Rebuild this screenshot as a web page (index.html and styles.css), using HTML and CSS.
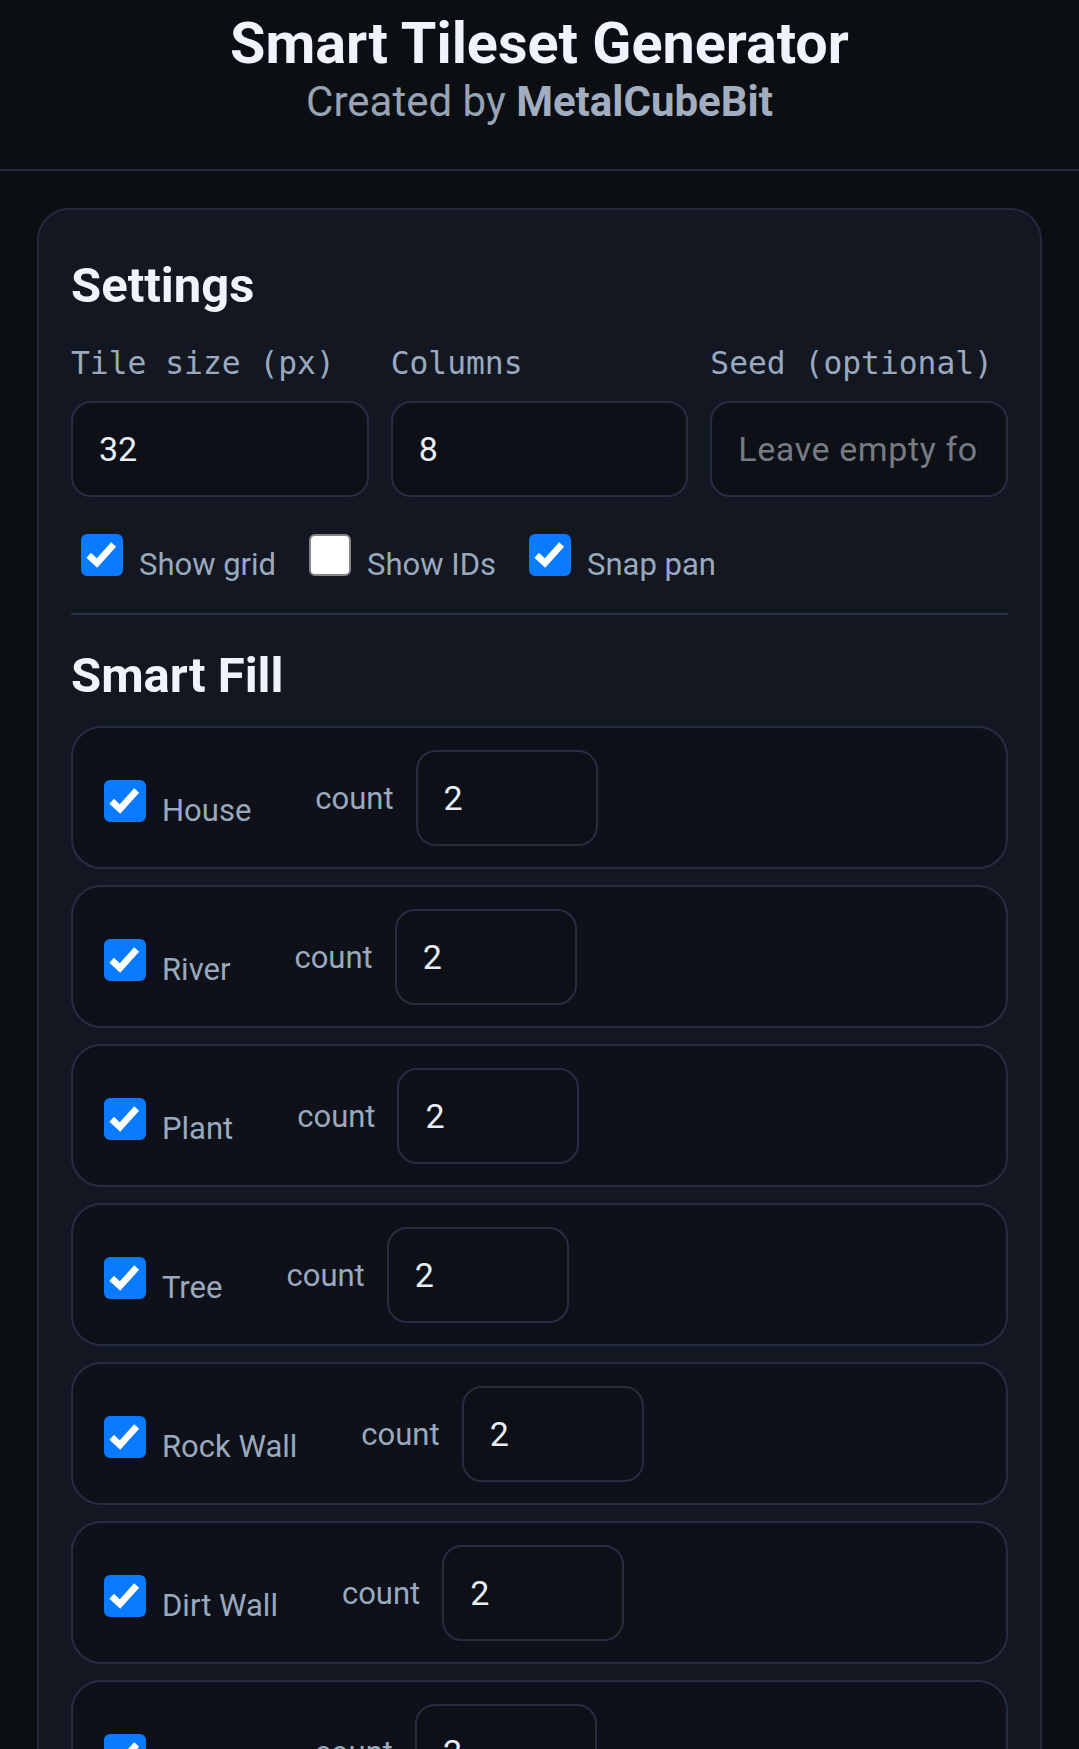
FILE: index.html
```html
<!DOCTYPE html>
<html lang="en">
	<head>
		<meta charset="utf-8">
		<title>Smart Tileset Generator</title>
		<link rel="stylesheet" href="styles.css">
	</head>

	<body>
		<header class="top">
			<h1 class="title">Smart Tileset Generator</h1>
			<p class="byline">Created by <strong>MetalCubeBit</strong></p>
		</header>

		<main class="page">
			<section class="card">
				<h2>Settings</h2>
				<div class="fields">
					<label class="field">
						<span class="field-label">Tile size (px)</span>
						<input class="input" type="text" value="32">
					</label>
					<label class="field">
						<span class="field-label">Columns</span>
						<input class="input" type="text" value="8">
					</label>
					<label class="field">
						<span class="field-label">Seed (optional)</span>
						<input class="input" type="text" placeholder="Leave empty for random">
					</label>
				</div>

				<div class="toggles">
					<label class="toggle">
						<span class="box on"><svg viewBox="0 0 16 16"><path d="M2.4 8.1 L5.9 11.4 L12.9 3.6"/></svg></span>
						<span>Show grid</span>
					</label>
					<label class="toggle">
						<span class="box"></span>
						<span>Show IDs</span>
					</label>
					<label class="toggle">
						<span class="box on"><svg viewBox="0 0 16 16"><path d="M2.4 8.1 L5.9 11.4 L12.9 3.6"/></svg></span>
						<span>Snap pan</span>
					</label>
				</div>

				<hr class="divider">

				<h2 class="fill-head">Smart Fill</h2>
				<div class="fill-list">
					<div class="fill-row">
						<label class="toggle fill-name">
							<span class="box on"><svg viewBox="0 0 16 16"><path d="M2.4 8.1 L5.9 11.4 L12.9 3.6"/></svg></span>
							<span>House</span>
						</label>
						<span class="count-label">count</span>
						<input class="input count" type="text" value="2">
					</div>
					<div class="fill-row">
						<label class="toggle fill-name">
							<span class="box on"><svg viewBox="0 0 16 16"><path d="M2.4 8.1 L5.9 11.4 L12.9 3.6"/></svg></span>
							<span>River</span>
						</label>
						<span class="count-label">count</span>
						<input class="input count" type="text" value="2">
					</div>
					<div class="fill-row">
						<label class="toggle fill-name">
							<span class="box on"><svg viewBox="0 0 16 16"><path d="M2.4 8.1 L5.9 11.4 L12.9 3.6"/></svg></span>
							<span>Plant</span>
						</label>
						<span class="count-label">count</span>
						<input class="input count" type="text" value="2">
					</div>
					<div class="fill-row">
						<label class="toggle fill-name">
							<span class="box on"><svg viewBox="0 0 16 16"><path d="M2.4 8.1 L5.9 11.4 L12.9 3.6"/></svg></span>
							<span>Tree</span>
						</label>
						<span class="count-label">count</span>
						<input class="input count" type="text" value="2">
					</div>
					<div class="fill-row">
						<label class="toggle fill-name">
							<span class="box on"><svg viewBox="0 0 16 16"><path d="M2.4 8.1 L5.9 11.4 L12.9 3.6"/></svg></span>
							<span>Rock Wall</span>
						</label>
						<span class="count-label">count</span>
						<input class="input count" type="text" value="2">
					</div>
					<div class="fill-row">
						<label class="toggle fill-name">
							<span class="box on"><svg viewBox="0 0 16 16"><path d="M2.4 8.1 L5.9 11.4 L12.9 3.6"/></svg></span>
							<span>Dirt Wall</span>
						</label>
						<span class="count-label">count</span>
						<input class="input count" type="text" value="2">
					</div>
					<div class="fill-row">
						<label class="toggle fill-name">
							<span class="box on"><svg viewBox="0 0 16 16"><path d="M2.4 8.1 L5.9 11.4 L12.9 3.6"/></svg></span>
							<span>Bridge</span>
						</label>
						<span class="count-label">count</span>
						<input class="input count" type="text" value="2">
					</div>
				</div>
			</section>
		</main>
	</body>
</html>
```

FILE: styles.css
```css
/* general styling */
* {
	box-sizing: border-box;
	margin: 0;
	padding: 0;
}

body {
	background-color: #0b0e13;
	color: #e9eef6;
	font-family: Roboto, "Noto Sans", sans-serif;
}

/* header */
.top {
	border-bottom: 2px solid #222a39;
	padding: 10px 20px 42px;
	text-align: center;
}

.title {
	color: #eef3fc;
	font-size: 57.5px;
	font-weight: 700;
	line-height: 68px;
}

.byline {
	color: #98a3b4;
	font-size: 42px;
	line-height: 50px;
	margin-top: -1px;
}

.byline strong {
	color: #a2aec0;
	font-weight: 700;
}

/* card */
.page {
	padding: 37px 37px 0;
}

.card {
	background-color: #131722;
	border: 2px solid #232b3b;
	border-radius: 32px;
	padding: 47px 32px 32px;
}

h2 {
	color: #eef3fc;
	font-size: 49px;
	font-weight: 700;
	line-height: 58px;
}

.fields {
	display: grid;
	gap: 22px;
	grid-template-columns: repeat(3, 1fr);
	margin-top: 30px;
}

.field-label {
	color: #9aa9bd;
	display: block;
	font-family: "DejaVu Sans Mono", monospace;
	font-size: 31.3px;
	line-height: 37px;
	margin-bottom: 19px;
	white-space: nowrap;
}

.input {
	background-color: #0d1017;
	border: 2px solid #252e41;
	border-radius: 20px;
	color: #e9eef6;
	display: block;
	font-family: Roboto, sans-serif;
	font-size: 34px;
	height: 96px;
	outline: none;
	padding: 0 26px;
	width: 100%;
}

.input::placeholder {
	color: #767b82;
	letter-spacing: 0.6px;
}

/* checkboxes */
.toggles {
	display: flex;
	gap: 23px;
	margin-top: 27px;
}

.toggle {
	align-items: flex-end;
	color: #9aa9bd;
	display: flex;
	font-size: 31px;
	line-height: 32px;
}

.box {
	background-color: #fff;
	border: 2px solid #858585;
	border-radius: 6px;
	display: block;
	flex: none;
	height: 42px;
	margin: 10px 16px 5px 10px;
	width: 42px;
}

.box.on {
	background-color: #0a7bff;
	border-color: #0a7bff;
}

.box svg {
	display: block;
	height: 38px;
	width: 38px;
}

.box path {
	fill: none;
	stroke: #fff;
	stroke-width: 2.8;
}

.divider {
	border: 0;
	border-top: 2px solid #283145;
	margin-top: 32px;
}

.fill-head {
	margin-top: 32px;
}

/* smart fill rows */
.fill-list {
	display: flex;
	flex-direction: column;
	gap: 16px;
	margin-top: 21px;
}

.fill-row {
	align-items: center;
	background-color: #0e1119;
	border: 2px solid #252e41;
	border-radius: 30px;
	display: flex;
	gap: 22px;
	padding: 22px 21px 21px;
}

.fill-name {
	margin-right: 42px;
}

.count-label {
	color: #9aa9bd;
	font-size: 31px;
	line-height: 37px;
}

.input.count {
	width: 182px;
}
```
